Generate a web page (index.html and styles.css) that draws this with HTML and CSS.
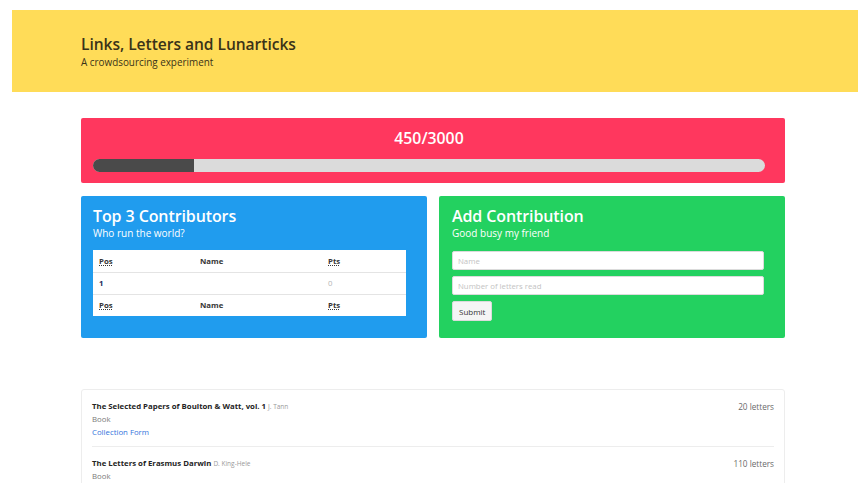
FILE: index.html
```html
<!DOCTYPE html>
<html lang="en">
<head>
<meta charset="utf-8">
<title>Links, Letters and Lunarticks</title>
<link rel="stylesheet" href="styles.css">
</head>
<body>
<header class="hero">
  <div class="hero-inner">
    <h1 class="hero-title">Links, Letters and Lunarticks</h1>
    <p class="hero-sub">A crowdsourcing experiment</p>
  </div>
</header>

<main class="container">
  <section class="card card-red progress-card">
    <div class="progress-count">450/3000</div>
    <div class="progress-track"><div class="progress-fill" style="width:15%"></div></div>
  </section>

  <div class="columns">
    <section class="card card-blue panel">
      <h2 class="panel-title">Top 3 Contributors</h2>
      <p class="panel-sub">Who run the world?</p>
      <table class="board">
        <thead>
          <tr><th><abbr title="Position">Pos</abbr></th><th>Name</th><th><abbr title="Points">Pts</abbr></th></tr>
        </thead>
        <tbody>
          <tr><td class="pos">1</td><td></td><td class="pts">0</td></tr>
        </tbody>
        <tfoot>
          <tr><th><abbr title="Position">Pos</abbr></th><th>Name</th><th><abbr title="Points">Pts</abbr></th></tr>
        </tfoot>
      </table>
    </section>

    <section class="card card-green panel panel-form">
      <h2 class="panel-title">Add Contribution</h2>
      <p class="panel-sub">Good busy my friend</p>
      <form class="contrib-form">
        <input class="field" type="text" placeholder="Name">
        <input class="field" type="text" placeholder="Number of letters read">
        <button class="btn" type="button">Submit</button>
      </form>
    </section>
  </div>

  <section class="sources">
    <article class="source">
      <div class="source-info">
        <div class="source-title"><strong>The Selected Papers of Boulton &amp; Watt, vol. 1</strong> <span class="source-author">J. Tann</span></div>
        <div class="source-type">Book</div>
        <a class="source-link" href="#">Collection Form</a>
      </div>
      <div class="source-count">20 letters</div>
    </article>
    <article class="source">
      <div class="source-info">
        <div class="source-title"><strong>The Letters of Erasmus Darwin</strong> <span class="source-author">D. King-Hele</span></div>
        <div class="source-type">Book</div>
      </div>
      <div class="source-count">110 letters</div>
    </article>
  </section>
</main>
</body>
</html>
```

FILE: styles.css
```css
* { box-sizing: border-box; }

html, body { margin: 0; }

body {
  padding: 10px 0 0 12px;
  font-family: "Open Sans", "Noto Sans", sans-serif;
  color: #4a4a4a;
  background: #fff;
  overflow: hidden;
}

/* top banner */
.hero {
  background: #ffdc58;
  height: 82px;
  display: flex;
  align-items: center;
}
.hero-inner { margin-left: 69px; padding-top: 0; }
.hero-title {
  margin: 0;
  font-size: 15.6px;
  font-weight: 600;
  color: #3a3318;
  line-height: 19px;
  letter-spacing: -0.05px;
}
.hero-sub {
  margin: 2px 0 0;
  font-size: 9.9px;
  color: #3a3318;
  line-height: 12px;
}

.container {
  width: 704px;
  margin: 26px 0 0 69px;
}

.card { border-radius: 2px; }
.card-red { background: #ff375e; }
.card-blue { background: #209cee; }
.card-green { background: #23d160; }

/* progress */
.progress-card {
  height: 65px;
  padding: 10px 20px 0 12px;
}
.progress-count {
  text-align: center;
  color: #fff;
  font-size: 15.8px;
  font-weight: 600;
  line-height: 20px;
  margin-bottom: 11px;
}
.progress-track {
  height: 13px;
  background: #dbdbdb;
  border-radius: 7px;
  overflow: hidden;
}
.progress-fill {
  height: 100%;
  background: #4a4a4a;
}

/* two panels */
.columns {
  display: grid;
  grid-template-columns: 1fr 1fr;
  gap: 12px;
  margin-top: 13px;
}
.panel {
  height: 142px;
  padding: 9px 21px 0 12px;
  color: #fff;
}
.panel-form { padding-left: 13px; }
.panel-title {
  margin: 0;
  font-size: 16px;
  font-weight: 600;
  line-height: 22px;
  letter-spacing: -0.1px;
}
.panel-sub {
  margin: 0 0 10px;
  font-size: 10px;
  line-height: 13px;
}

.board {
  width: 100%;
  border-collapse: collapse;
  background: #fff;
  font-size: 7.8px;
  color: #363636;
}
.board th, .board td {
  text-align: left;
  height: 22px;
  padding: 0 6px;
  border-bottom: 1px solid #e4e4e4;
}
.board tfoot th { border-bottom: 0; }
.board th { font-weight: 700; }
.board th:nth-child(1) { width: 101px; }
.board th:nth-child(2) { width: 128px; }
.board abbr { text-decoration: underline dotted; }
.board td.pos { font-weight: 700; color: #1d2a5a; }
.board td.pts { color: #b5b5b5; }

.contrib-form { display: flex; flex-direction: column; align-items: flex-start; }
.field {
  width: 100%;
  height: 19px;
  margin: 0 0 6px;
  padding: 0 5px;
  border: 1px solid #dbdbdb;
  border-radius: 2px;
  font: inherit;
  font-size: 7.8px;
  color: #363636;
  background: #fff;
}
.field::placeholder { color: #c3c3c3; }
.field:first-child { margin-top: 1px; }
.btn {
  height: 20px;
  padding: 0 6px;
  margin-top: 0;
  border: 1px solid #dbdbdb;
  border-radius: 2px;
  background: #f5f5f5;
  font: inherit;
  font-size: 8px;
  color: #363636;
}

/* source list */
.sources {
  margin-top: 51px;
  border: 1px solid #ededed;
  border-radius: 3px;
  padding: 0 10px;
}
.source {
  display: flex;
  justify-content: space-between;
  align-items: flex-start;
  padding: 10px 0 7px;
  border-bottom: 1px solid #ededed;
  font-size: 7.8px;
  line-height: 13px;
}
.source:last-child { border-bottom: 0; }
.source-title strong { color: #242424; font-weight: 700; }
.source-author { color: #9a9a9a; font-size: 6.5px; }
.source-type { color: #7a7a7a; }
.source-link { color: #3273dc; text-decoration: none; display: block; }
.source-count { color: #6a6a6a; font-size: 8.2px; }
```
